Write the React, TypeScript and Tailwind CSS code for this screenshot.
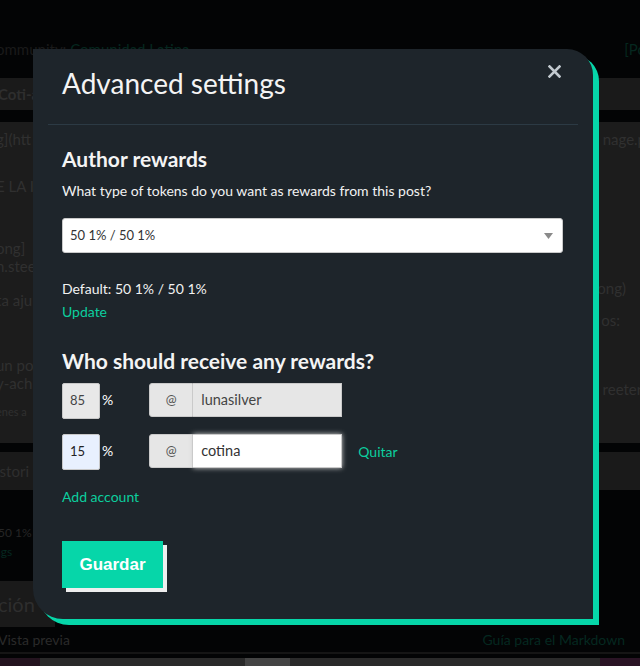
import React from "react";

const font = { fontFamily: '"Lato", "Noto Sans", sans-serif' };

export default function App() {
  return (
    <div className="relative w-[640px] h-[666px] overflow-hidden bg-[#030405]" style={font}>
      {/* Background page (dimmed) */}
      <div className="flex flex-col w-full h-full text-[#2a2a2a]">
        <div className="h-[38px] shrink-0" />
        <div className="h-[22px] shrink-0 flex items-center justify-between text-[15px] leading-none">
          <span className="-ml-[4px]">
            <span className="text-[#1a1a1a]">ommunity: </span>
            <span className="text-[#05271f]">Comunidad Latina</span>
          </span>
          <span className="text-[#05271f] mr-[-6px]">[Po</span>
        </div>
        <div className="h-[18px] shrink-0" />
        <div className="h-[32px] shrink-0 bg-[#1a1a1a] flex items-center text-[15px] font-bold text-[#2e2e2e]">
          <span className="-ml-[2px]">Coti-a</span>
        </div>
        <div className="h-[12px] shrink-0" />
        <div className="h-[321px] shrink-0 bg-[#1c1c1c] flex justify-between text-[15px] text-[#303030]">
          <div className="flex flex-col -ml-[4px]">
            <span className="mt-[6px]">g](htt</span>
            <span className="mt-[24px]">E LA I</span>
            <span className="mt-[42px] leading-[18px]">ong]</span>
            <span className="leading-[18px]">n.stee</span>
            <span className="mt-[14px]">ta aju</span>
            <span className="mt-[44px] leading-[18px]">un po</span>
            <span className="leading-[18px]">y-achi</span>
            <span className="mt-[12px] text-[11px]">enes a</span>
          </div>
          <div className="flex flex-col items-end mr-[14px]">
            <span className="mt-[6px] -mr-[20px]">nage.p</span>
            <span className="mt-[126px]">ong)</span>
            <span className="mt-[10px] mr-[6px]">os:</span>
            <span className="mt-[46px] -mr-[20px]">reeter:</span>
          </div>
        </div>
        <div className="h-[9px] shrink-0" />
        <div className="h-[38px] shrink-0 bg-[#1a1a1a] flex items-center text-[15px] text-[#2e2e2e]">
          <span className="-ml-[4px]">istori</span>
        </div>
        <div className="h-[35px] shrink-0" />
        <div className="text-[12px] leading-[16px] text-[#262626] -ml-[2px]">50 1% /</div>
        <div className="text-[12px] leading-[22px] text-[#052820] -ml-[6px]">ngs</div>
        <div className="h-[18px] shrink-0" />
        <div className="w-[55px] h-[46px] shrink-0 bg-[#1a1a1a] flex items-center text-[20px] text-[#2e2e2e]">
          <span className="-ml-[2px]">ción</span>
        </div>
        <div className="flex justify-between items-center text-[14px] mt-[2px]">
          <span className="text-[#2a2a2a] -ml-[2px]">Vista previa</span>
          <span className="text-[#052820] mr-[15px]">Guía para el Markdown</span>
        </div>
        <div className="h-[2px] shrink-0" />
        <div className="h-[2px] shrink-0 bg-[#151515]" />
        <div className="h-[4px] shrink-0" />
        <div className="flex-1 flex">
          <div className="w-[40px] bg-[#24141f]" />
          <div className="w-[205px] bg-[#2a2a2a]" />
          <div className="w-[45px] bg-[#444444]" />
          <div className="flex-1 bg-[#2a2a2a]" />
          <div className="w-[40px] bg-[#2a1425]" />
        </div>
      </div>

      {/* Modal */}
      <div className="absolute left-[33px] top-[49px] w-[560px] h-[570px] bg-[#1e252b] rounded-tr-[26px] rounded-bl-[30px] shadow-[6px_6px_0_#06d6a9] text-white">
        <div className="flex items-start justify-between pl-[29px] pr-[32px] pt-[14px]">
          <h1 className="text-[28px] leading-[40px] font-normal text-[#f4f4f4]">Advanced settings</h1>
          <svg width="13" height="13" viewBox="0 0 13 13" className="mt-[2px]">
            <path d="M1.5 1.5l10 10M11.5 1.5l-10 10" stroke="#c2c9cf" strokeWidth="2.6" strokeLinecap="square" />
          </svg>
        </div>
        <div className="mx-[15px] mt-[21px] h-[1px] bg-[#2c3a44]" />
        <div className="pl-[29px] pr-[30px]">
          <h2 className="mt-[21px] text-[21px] leading-[26px] font-bold text-[#f4f4f4]">Author rewards</h2>
          <p className="mt-[9px] text-[14px] leading-[20px] text-[#f2f2f2]">
            What type of tokens do you want as rewards from this post?
          </p>
          <div className="mt-[17px] h-[35px] bg-white rounded-[3px] border border-[#cacaca] flex items-center justify-between pl-[7px] pr-[9px]">
            <span className="text-[13px] text-[#333]">50 1% / 50 1%</span>
            <svg width="9" height="6" viewBox="0 0 9 6"><path d="M0 0h9L4.5 6z" fill="#8a8a8a" /></svg>
          </div>
          <p className="mt-[26px] text-[14px] leading-[20px] text-[#f2f2f2]">Default: 50 1% / 50 1%</p>
          <p className="mt-[3px] text-[14px] leading-[20px] text-[#0ccf9f]">Update</p>
          <h2 className="mt-[26px] text-[21px] leading-[26px] font-bold text-[#f4f4f4]">Who should receive any rewards?</h2>

          <div className="mt-[9px] flex items-start">
            <div className="w-[38px] h-[36px] bg-[#e8e8e8] border border-[#c8c8c8] rounded-[2px] flex items-center pl-[7px] text-[13px] text-[#444]">85</div>
            <span className="ml-[2px] mt-[6px] text-[14px] text-white">%</span>
            <div className="ml-[36px] flex h-[34px]">
              <div className="w-[44px] bg-[#e6e6e6] border border-[#cacaca] rounded-l-[3px] flex items-center justify-center text-[13px] text-[#555]">@</div>
              <div className="w-[149px] bg-[#e6e6e6] border border-[#cacaca] border-l-0 flex items-center pl-[8px] text-[14.5px] text-[#444]">lunasilver</div>
            </div>
          </div>

          <div className="mt-[15px] flex items-start">
            <div className="w-[38px] h-[36px] bg-[#e8f0fe] border border-[#c8c8c8] rounded-[2px] flex items-center pl-[7px] text-[13px] text-[#222]">15</div>
            <span className="ml-[2px] mt-[6px] text-[14px] text-white">%</span>
            <div className="ml-[36px] flex h-[34px]">
              <div className="w-[44px] bg-[#e6e6e6] border border-[#cacaca] rounded-l-[3px] flex items-center justify-center text-[13px] text-[#555]">@</div>
              <div className="w-[149px] bg-white border border-[#cacaca] border-l-0 flex items-center pl-[8px] text-[14.5px] text-[#333] shadow-[0_0_5px_#cccccc]">cotina</div>
            </div>
            <span className="ml-[16px] mt-[7px] text-[14px] text-[#0ccf9f]">Quitar</span>
          </div>

          <p className="mt-[17px] text-[14px] leading-[20px] text-[#0ccf9f]">Add account</p>

          <button
            className="mt-[34px] w-[101px] h-[47px] bg-[#06d6a9] text-white text-[17px] font-bold shadow-[4px_4px_0_#eeeeee]"
            style={{ fontFamily: '"Liberation Sans", Arial, sans-serif' }}
          >
            Guardar
          </button>
        </div>
      </div>
    </div>
  );
}
